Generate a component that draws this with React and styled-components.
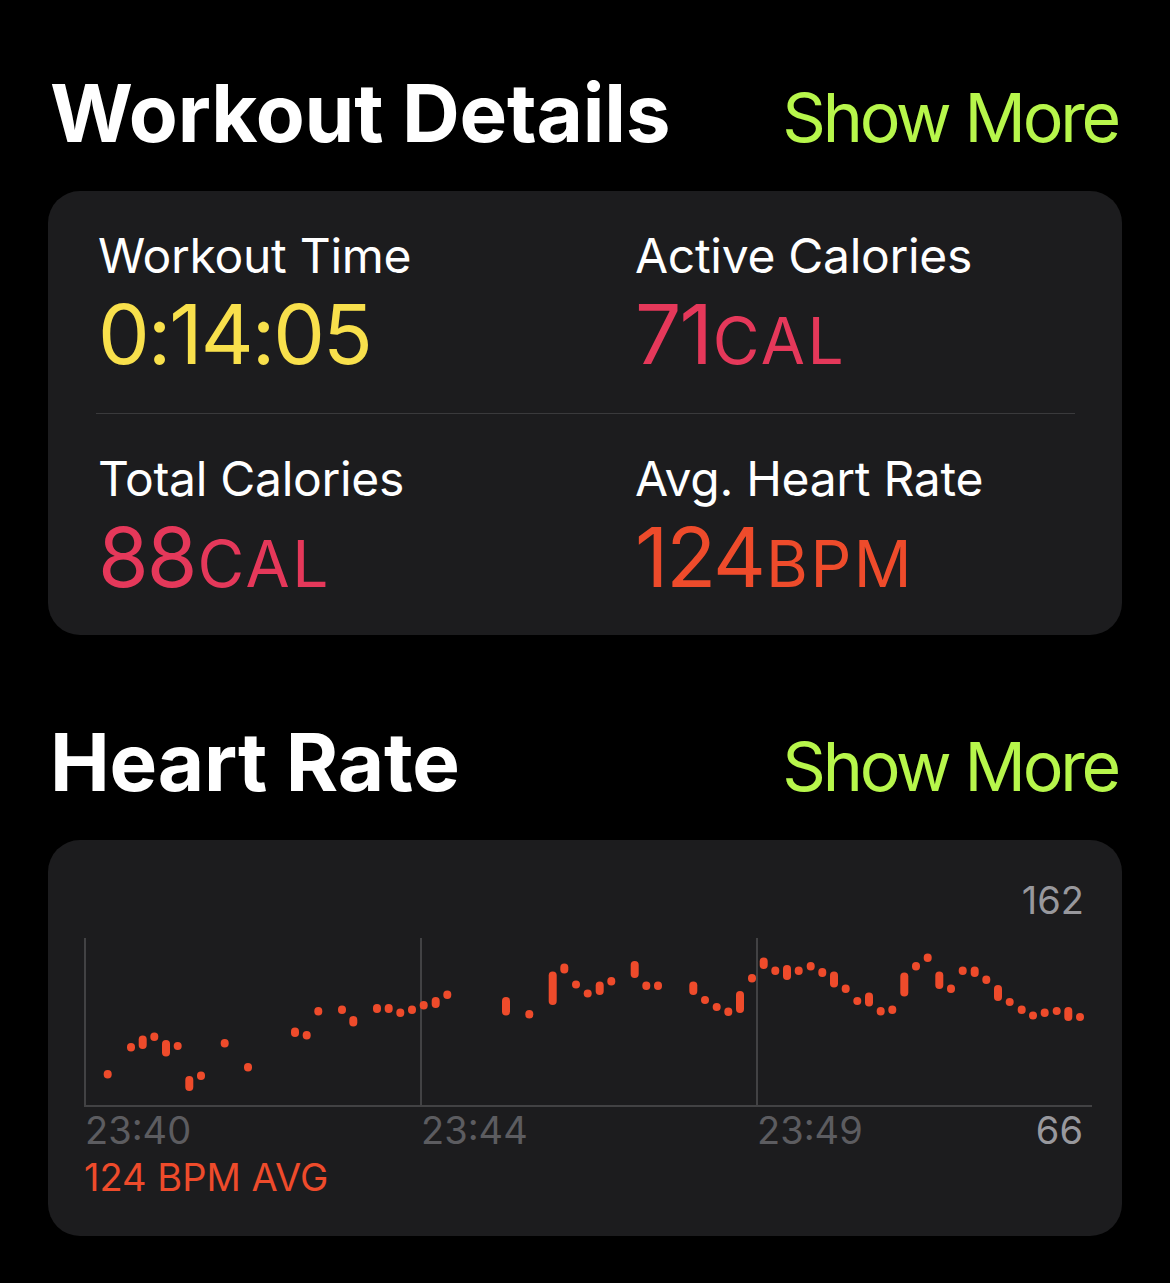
import React from "react";
import styled, { createGlobalStyle } from "styled-components";

const GlobalStyle = createGlobalStyle`
  html, body {
    margin: 0;
    padding: 0;
    background: #000;
  }
  body {
    font-family: Inter, "Noto Sans", "Liberation Sans", sans-serif;
    color: #fff;
    -webkit-font-smoothing: antialiased;
  }
`;

const Page = styled.div`
  width: 1170px;
  min-height: 1283px;
  box-sizing: border-box;
  padding: 65px 48px 0;
  background: #000;
`;

const SectionHeader = styled.div`
  display: flex;
  align-items: baseline;
  justify-content: space-between;
  padding: 0 4px 0 2px;
  margin-top: ${({ $first }) => ($first ? "0" : "79px")};
`;

const Title = styled.h2`
  margin: 0;
  font-size: 80px;
  line-height: 96px;
  font-weight: 700;
  letter-spacing: -0.2px;
`;

const ShowMore = styled.a`
  font-size: 68px;
  line-height: 80px;
  font-weight: 400;
  letter-spacing: -3.2px;
  color: #b7f64b;
  text-decoration: none;
`;

const Card = styled.section`
  margin-top: 30px;
  background: #1c1c1e;
  border-radius: 32px;
`;

const StatsCard = styled(Card)`
  padding: 0 47px 0 48px;
`;

const StatRow = styled.div`
  display: grid;
  grid-template-columns: 537px 1fr;
  padding: ${({ $last }) => ($last ? "37px 2px 37px" : "37px 2px 38px")};
  border-bottom: ${({ $last }) => ($last ? "none" : "1px solid #3a3a3c")};
`;

const Stat = styled.div`
  display: flex;
  flex-direction: column;
  gap: 11px;
`;

const Label = styled.div`
  font-size: 48px;
  line-height: 56px;
  letter-spacing: -0.3px;
  color: #fff;
`;

const Value = styled.div`
  font-size: 82px;
  line-height: 80px;
  color: ${({ $color }) => $color};
  letter-spacing: -2px;
`;

const Unit = styled.span`
  font-size: 64px;
  line-height: 1;
  letter-spacing: 2.5px;
  margin-left: 2px;
`;

const ChartCard = styled(Card)`
  padding: 38px 30px 37px 36px;
`;

const MaxLabel = styled.div`
  text-align: right;
  padding-right: 8px;
  font-size: 38px;
  line-height: 44px;
  color: #98989d;
`;

const Plot = styled.svg`
  display: block;
  margin-top: 15px;
`;

const AxisRow = styled.div`
  display: grid;
  grid-template-columns: 336px 336px 1fr;
  font-size: 38px;
  line-height: 44px;
  color: #5c5c60;
`;

const Tick = styled.span`
  padding-left: 1px;
`;

const LastTick = styled.div`
  display: flex;
  justify-content: space-between;
  padding: 0 9px 0 1px;
`;

const MinLabel = styled.span`
  color: #98989d;
`;

const AvgLabel = styled.div`
  margin-top: 3px;
  font-size: 38px;
  line-height: 44px;
  color: #ee4b2b;
`;

const RED = "#e5385a";
const ORANGE = "#ee4b2b";
const YELLOW = "#f8e04c";

// [x, top, bottom] measured in page coordinates; the plot origin is (84, 937)
const samples = [
  [107.7, 1070, 1078.5], [131, 1043, 1051.5], [142.7, 1035.5, 1049],
  [154.3, 1032.5, 1041], [166, 1040, 1056.5], [177.7, 1042, 1050],
  [189.3, 1076, 1091], [201, 1071.5, 1080], [224.7, 1039, 1047.5],
  [248, 1063, 1071.5], [295, 1027.5, 1037], [306.7, 1031, 1039.5],
  [318.3, 1007, 1015.5], [342, 1005.5, 1014], [353.3, 1016, 1026.5],
  [377, 1004, 1013], [388.7, 1004, 1013], [400.3, 1008.5, 1017],
  [412, 1005.5, 1014], [423.7, 1001, 1009.5], [435.7, 997, 1008],
  [447.3, 990.5, 999], [506, 997, 1015.5], [529.3, 1010, 1018.5],
  [552.7, 971.5, 1005], [564.3, 963.5, 973.5], [576, 980.5, 988.5],
  [587.7, 989.5, 997.5], [599.7, 981.5, 995], [611.3, 977, 985.5],
  [634.7, 961, 978], [646.3, 981.5, 990], [658, 981.5, 990],
  [693.3, 981.5, 995], [705, 996, 1004], [716.7, 1003, 1011],
  [728.3, 1007.5, 1016], [740, 991, 1013], [752, 974, 982.5],
  [763.7, 957.5, 969], [775.3, 966.5, 975], [787, 965, 980],
  [798.7, 966.5, 975], [810.7, 962, 970.5], [822.3, 968, 977],
  [834, 971.5, 987.5], [845.7, 984.5, 993], [857.3, 997, 1005],
  [869, 992.5, 1006.5], [880.7, 1007, 1015.5], [892.3, 1005.5, 1014],
  [904.3, 972.5, 996.5], [916, 962, 970.5], [927.7, 953.5, 962],
  [939.3, 971.5, 989], [951, 984.5, 993], [962.7, 966.5, 975],
  [974.7, 966.5, 977], [986.3, 975.5, 984], [998, 985, 1001],
  [1009.7, 998, 1006], [1021.7, 1005.5, 1014], [1033, 1011.5, 1019],
  [1044.7, 1008.5, 1017], [1056.7, 1007, 1015], [1068.3, 1007, 1021],
  [1080, 1013, 1021],
];

const PLOT_W = 1010;
const PLOT_H = 171;
const OX = 84;
const OY = 937;

function HeartRateChart() {
  return (
    <Plot width={PLOT_W} height={PLOT_H} viewBox={`0 0 ${PLOT_W} ${PLOT_H}`}>
      <g stroke="#424244" strokeWidth="2">
        <line x1="1" y1="1" x2="1" y2={PLOT_H - 2} />
        <line x1="337" y1="1" x2="337" y2={PLOT_H - 2} />
        <line x1="673" y1="1" x2="673" y2={PLOT_H - 2} />
        <line x1="0" y1={PLOT_H - 2} x2={PLOT_W - 2} y2={PLOT_H - 2} />
      </g>
      <g fill={ORANGE}>
        {samples.map(([x, top, bottom]) => {
          const h = Math.max(bottom - top, 8);
          return (
            <rect
              key={x}
              x={x - OX - 4}
              y={top - OY}
              width="8"
              height={h}
              rx="4"
            />
          );
        })}
      </g>
    </Plot>
  );
}

export default function App() {
  return (
    <>
      <GlobalStyle />
      <Page>
        <SectionHeader $first>
          <Title>Workout Details</Title>
          <ShowMore>Show More</ShowMore>
        </SectionHeader>
        <StatsCard>
          <StatRow>
            <Stat>
              <Label>Workout Time</Label>
              <Value $color={YELLOW}>0:14:05</Value>
            </Stat>
            <Stat>
              <Label>Active Calories</Label>
              <Value $color={RED}>
                71<Unit>CAL</Unit>
              </Value>
            </Stat>
          </StatRow>
          <StatRow $last>
            <Stat>
              <Label>Total Calories</Label>
              <Value $color={RED}>
                88<Unit>CAL</Unit>
              </Value>
            </Stat>
            <Stat>
              <Label>Avg. Heart Rate</Label>
              <Value $color={ORANGE}>
                124<Unit>BPM</Unit>
              </Value>
            </Stat>
          </StatRow>
        </StatsCard>

        <SectionHeader>
          <Title>Heart Rate</Title>
          <ShowMore>Show More</ShowMore>
        </SectionHeader>
        <ChartCard>
          <MaxLabel>162</MaxLabel>
          <HeartRateChart />
          <AxisRow>
            <Tick>23:40</Tick>
            <Tick>23:44</Tick>
            <LastTick>
              <span>23:49</span>
              <MinLabel>66</MinLabel>
            </LastTick>
          </AxisRow>
          <AvgLabel>124 BPM AVG</AvgLabel>
        </ChartCard>
      </Page>
    </>
  );
}
